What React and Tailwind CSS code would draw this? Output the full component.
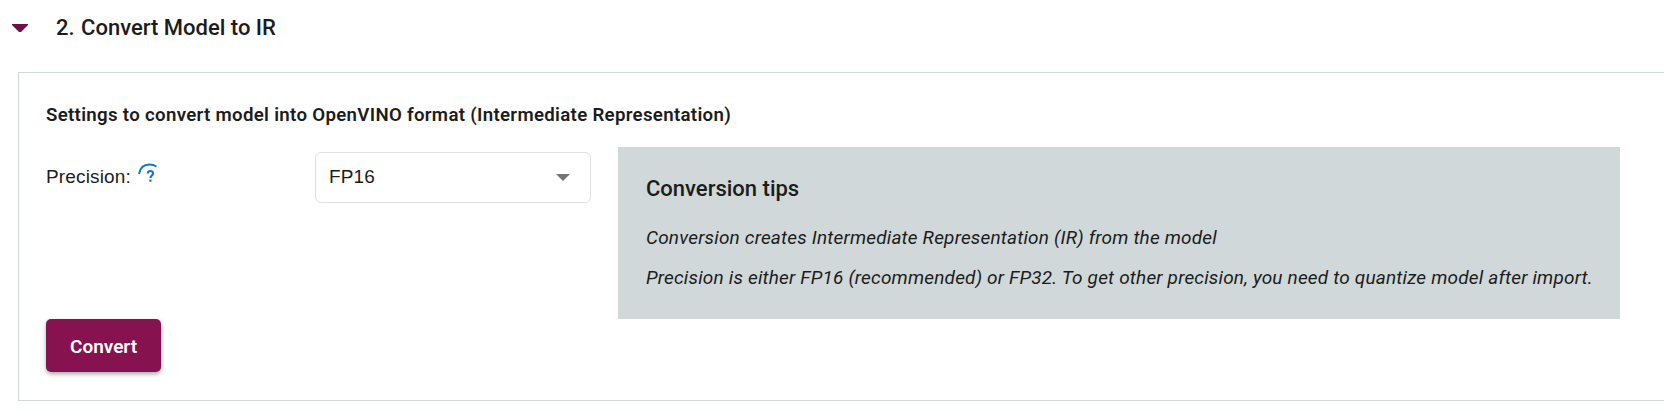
export default function App() {
  return (
    <div className="h-[410px] w-[1664px] overflow-hidden bg-white font-['Roboto',sans-serif] text-[19px] text-[#1c1c1c]">
      <header className="flex h-[72px] items-start pl-[12px] pt-[12px]">
        <svg className="mt-[12px] h-[8px] w-[16px]" viewBox="0 0 16 8"><path d="M0 0h16v1L9 8H7L0 1z" fill="#6d1045" /></svg>
        <h2 className="ml-[28px] pt-px text-[22px] font-medium leading-[30px]"><span className="mr-px">2. </span>Convert Model to IR</h2>
      </header>
      <section className="ml-[18px] h-[329px] w-[1700px] border border-[#d0d8d9] pl-[27px]">
        <h3 className="pt-[27px] text-[18.67px] font-semibold leading-[30px] tracking-[0.31px]">Settings to convert model into OpenVINO format (Intermediate Representation)</h3>
        <div className="mt-[17px] flex h-[172px] items-start">
          <div className="flex w-[269px] pt-[15px] leading-[30px]">
            <span className="font-['Liberation_Sans',sans-serif] tracking-[0.15px]">Precision:</span>
            <svg className="ml-[7px] mt-px h-[20px] w-[19px]" viewBox="0 0 19 20" fill="none" stroke="#0b7ac9"><path d="M1 11C2 5 6 1.5 11.5 1.5Q15.5 1.5 18.5 3.5" strokeWidth="1.9" /><path d="M9.8 10.5C9.8 8.7 10.8 8 12.4 8s2.6.9 2.6 2.4c0 2-2.6 2.2-2.6 4.7M12.4 16.5v2.2" strokeWidth="2.2" /></svg>
          </div>
          <div className="mt-[5px] flex h-[51px] w-[276px] items-center justify-between rounded-[6px] border border-[#e0e0e0] pl-[13px] pr-[20px]">
            <span className="font-['Liberation_Sans',sans-serif] tracking-[0.15px]">FP16</span>
            <svg className="h-[7px] w-[14px]" viewBox="0 0 14 7"><path d="M0 0h14L7 7z" fill="#757575" /></svg>
          </div>
          <aside className="ml-[27px] h-[172px] w-[1002px] bg-[#d0d8d9] pl-[28px] pt-[27px]">
            <h4 className="text-[22px] font-medium leading-[30px]">Conversion tips</h4>
            <p className="mt-[19px] whitespace-nowrap italic leading-[30px] tracking-[0.18px]">Conversion creates Intermediate Representation (IR) from the model</p>
            <p className="mt-[10px] whitespace-nowrap italic leading-[30px] tracking-[0.18px]">Precision is either FP16 (recommended) or FP32. To get other precision, you need to quantize model after import.</p>
          </aside>
        </div>
        <button className="h-[53px] w-[115px] rounded-[5px] bg-[#86134f] pt-[3px] text-[19px] font-semibold text-white shadow-[0_2px_4px_rgba(0,0,0,0.35)]">Convert</button>
      </section>
    </div>
  );
}
